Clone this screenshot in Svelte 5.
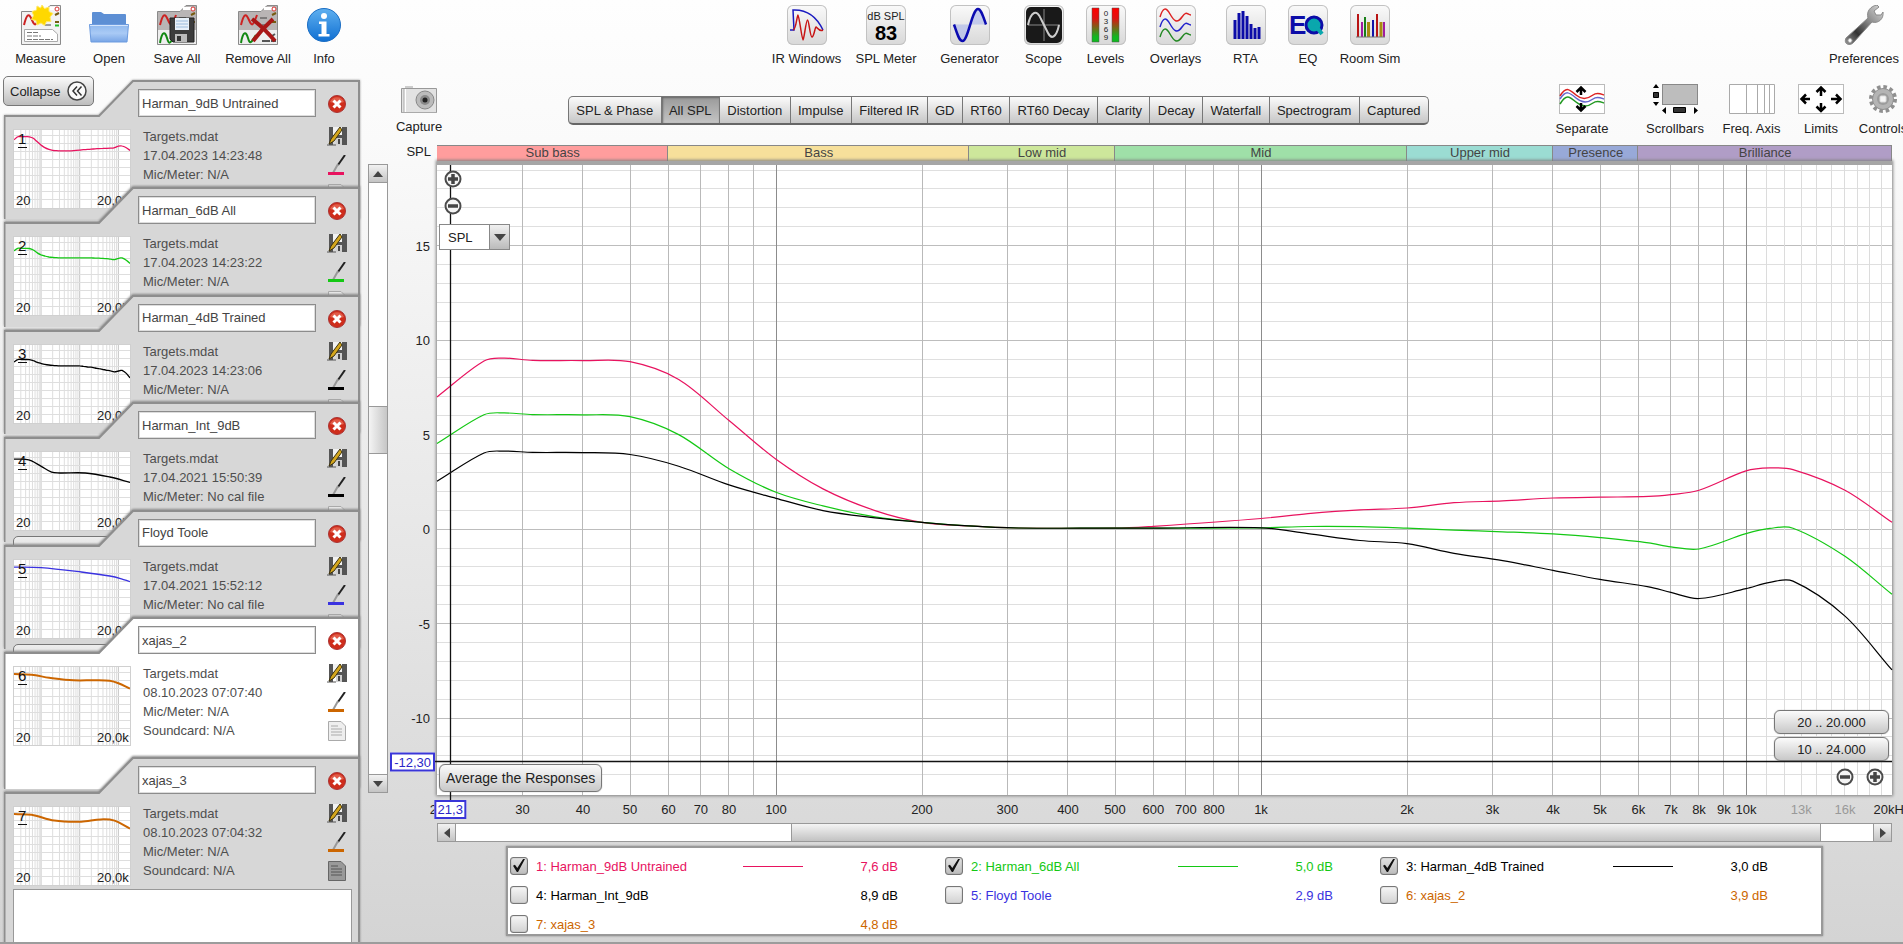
<script>
  let plot_w = 1455;
  let plot_h = 629;

  const F_MIN = 20;
  const F_MAX = 20000;
  const DB_TOP = 19.27;
  const DB_BOTTOM = -14.07;

  const freqs = [
    20, 25, 27.5, 31.5, 40, 50, 63, 80, 100, 125, 160, 200, 250, 315, 500, 600,
    1000, 1250, 1600, 2000, 2500, 3150, 4000, 5000, 6300, 7000, 8000, 10000,
    11200, 12500, 16000, 20000,
  ];

  const zip = (levels) => levels.map((db, i) => [freqs[i], db]);

  const harman_9 = zip([
    7.0, 8.9, 9.05, 8.93, 8.92, 8.86, 7.92, 5.75, 3.7, 2.13, 0.98, 0.36, 0.17,
    0.06, 0.05, 0.15, 0.56, 0.82, 1.02, 1.12, 1.4, 1.5, 1.65, 1.69, 1.73, 1.83,
    2.06, 3.08, 3.24, 3.15, 2.06, 0.36,
  ]);
  const harman_6 = zip([
    4.53, 6.05, 6.15, 6.06, 6.05, 5.95, 5.0, 3.2, 1.95, 1.23, 0.65, 0.36, 0.17,
    0.06, 0.05, 0.05, 0.07, 0.14, 0.13, 0.05, -0.05, -0.14, -0.25, -0.45, -0.73,
    -0.94, -1.05, -0.24, 0.04, 0.05, -1.44, -3.45,
  ]);
  const harman_4 = zip([
    2.53, 4.03, 4.13, 4.06, 4.05, 3.95, 3.33, 2.34, 1.63, 0.98, 0.6, 0.36, 0.17,
    0.06, 0.05, 0.05, 0.07, -0.24, -0.6, -0.77, -1.28, -1.67, -2.18, -2.66,
    -3.05, -3.35, -3.67, -3.15, -2.82, -2.75, -4.6, -7.45,
  ]);

  const cards = [
    { id: 1, name: "Harman_9dB Untrained", date: "17.04.2023 14:23:48", mic: "N/A", color: "#e8135f", value: "7,6 dB", on: true, points: harman_9 },
    { id: 2, name: "Harman_6dB All", date: "17.04.2023 14:23:22", mic: "N/A", color: "#14c814", value: "5,0 dB", on: true, points: harman_6 },
    { id: 3, name: "Harman_4dB Trained", date: "17.04.2023 14:23:06", mic: "N/A", color: "#000000", value: "3,0 dB", on: true, points: harman_4 },
    {
      id: 4, name: "Harman_Int_9dB", date: "17.04.2021 15:50:39", mic: "No cal file", color: "#000000", value: "8,9 dB",
      points: [[20, 8.6], [40, 8.5], [57, 7.6], [104, 4], [188, 0.5], [300, 0], [1400, 0], [6000, -2.5], [20000, -5.9]],
    },
    {
      id: 5, name: "Floyd Toole", date: "17.04.2021 15:52:12", mic: "No cal file", color: "#3a32e0", value: "2,9 dB",
      points: [[20, 8.7], [100, 8.3], [1100, 5.6], [6000, 3.1], [12000, 1.4], [20000, -0.4]],
    },
    {
      id: 6, name: "xajas_2", date: "08.10.2023 07:07:40", mic: "N/A", color: "#cc6600", value: "3,9 dB", bold: true, selected: true,
      points: [[20, 8.7], [57, 8.3], [163, 6.4], [700, 4.8], [2500, 4.8], [6000, 4.5], [10000, 3], [20000, -0.4]],
    },
    {
      id: 7, name: "xajas_3", date: "08.10.2023 07:04:32", mic: "N/A", color: "#cc6600", value: "4,8 dB", bold: true, notes: true,
      points: [[20, 8.7], [57, 8.3], [220, 4.6], [1100, 3.9], [3500, 5.4], [8000, 4.6], [20000, -0.4]],
    },
  ];

  const bands = [
    { name: "Sub bass", from: 20, to: 60, color: "#ff9d9d" },
    { name: "Bass", from: 60, to: 250, color: "#f7e09b" },
    { name: "Low mid", from: 250, to: 500, color: "#cde79b" },
    { name: "Mid", from: 500, to: 2000, color: "#9fe0a8" },
    { name: "Upper mid", from: 2000, to: 4000, color: "#9bdcd3" },
    { name: "Presence", from: 4000, to: 6000, color: "#98a9d8" },
    { name: "Brilliance", from: 6000, to: 20000, color: "#b09dc6" },
  ];

  const tabs = [
    "SPL & Phase", "All SPL", "Distortion", "Impulse", "Filtered IR", "GD", "RT60",
    "RT60 Decay", "Clarity", "Decay", "Waterfall", "Spectrogram", "Captured",
  ];
  let active_tab = "All SPL";

  const freq_labels = [
    [20, "20"], [30, "30"], [40, "40"], [50, "50"], [60, "60"], [70, "70"], [80, "80"],
    [100, "100"], [200, "200"], [300, "300"], [400, "400"], [500, "500"], [600, "600"],
    [700, "700"], [800, "800"], [1000, "1k"], [2000, "2k"], [3000, "3k"], [4000, "4k"],
    [5000, "5k"], [6000, "6k"], [7000, "7k"], [8000, "8k"], [9000, "9k"], [10000, "10k"],
    [13000, "13k"], [16000, "16k"], [20000, "20kHz"],
  ];

  const grid_freqs = [];
  for (let decade = 10; decade <= 10000; decade *= 10) {
    for (let i = 1; i < 10; i++) {
      const f = decade * i;
      if (f > F_MIN && f < F_MAX) grid_freqs.push(f);
    }
  }
  const fine_freqs = [11, 12, 13, 14, 15, 16, 17, 18, 19].map((k) => k * 1000);

  const grid_dbs = [];
  for (let db = 19; db >= -13; db--) grid_dbs.push(db);

  const freqToX = (f, w) => (Math.log10(f / F_MIN) / 3) * w;

  // smooth curve through the points
  const curve = (points, fx, fy) => {
    const p = points.map(([f, db]) => [fx(f), fy(db)]);
    let d = `M${p[0][0].toFixed(1)},${p[0][1].toFixed(1)}`;
    for (let i = 0; i < p.length - 1; i++) {
      const a = p[i - 1] || p[i];
      const b = p[i];
      const c = p[i + 1];
      const e = p[i + 2] || c;
      const t = (c[0] - b[0]) / 3;
      const mb = c === a ? 0 : (c[1] - a[1]) / (c[0] - a[0]);
      const mc = e[0] === b[0] ? 0 : (e[1] - b[1]) / (e[0] - b[0]);
      d += `C${(b[0] + t).toFixed(1)},${(b[1] + mb * t).toFixed(1)} ${(c[0] - t).toFixed(1)},${(c[1] - mc * t).toFixed(1)} ${c[0].toFixed(1)},${c[1].toFixed(1)}`;
    }
    return d;
  };

  const thumbX = (f) => freqToX(f, 116);
  const thumbY = (db) => 21 - db * 1.6;

  $: x = (f) => freqToX(f, plot_w);
  $: y = (db) => ((DB_TOP - db) / (DB_TOP - DB_BOTTOM)) * plot_h;
  $: line = (v) => Math.floor(v) + 0.5;
</script>

{#snippet sheet(gray)}
  <path d="M.5 39.500V6.500H23L29 .500H39.500V39.500Z" fill={gray ? "#b9b5b5" : "#f2f2f2"} stroke="#8a8a8a" />
  <path d="M26 3.500H34" stroke="#fff" stroke-width="3" />
  <circle cx="36" cy="4" r="2" fill="#fff" stroke="#d33" />
  <path d="M34 10l4-2M34 17h4" stroke="#765a10" stroke-width="2" />
  <path d="M22 13h7M24 20h6" stroke="#444" stroke-width="1" />
  <path d="M3 20C6 8 8 8 11 15s4 6 8-5" fill="none" stroke="#c22" stroke-width="2" />
{/snippet}

{#snippet floppy()}
  <path d="M13 13H37V37H16L13 34Z" fill="#3c3c3c" stroke="#222" />
  <rect x="18" y="13" width="14" height="12" fill="#e8f1fa" />
  <path d="M19 16h12M19 19h12M19 22h12" stroke="#9cbcdd" />
  <rect x="18" y="29" width="12" height="8" fill="#bbb" />
  <rect x="20" y="31" width="4" height="5" fill="#333" />
{/snippet}

{#snippet zoomSign(plus)}
  <svg width="18" height="18" viewBox="0 0 18 18">
    <circle cx="9" cy="9" r="7.500" fill="#f4f4f4" stroke="#4b4b4b" stroke-width="2" />
    <path d={plus ? "M4 9H14M9 4V14" : "M4 9H14"} stroke="#444" stroke-width="3.500" />
  </svg>
{/snippet}

<div class="page">
  <header class="toolbar">
    <div class="tools tools-file">
      <button class="tool">
        <svg width="40" height="40" viewBox="0 0 40 40">
          {@render sheet(false)}
          <path d="M3.500 24.500H31.500L36.500 29V36.500H3.500Z" fill="#fff" stroke="#aaa" />
          <path d="M6 27.500h12M6 31h14M6 34.500h26" stroke="#777" stroke-dasharray="5 1" />
          <path d="M34 20.500h4" stroke="#2b2" stroke-width="2" />
          <path d="M21 0l2.500 3.500L28 2l0 4.500 4 2-3 3.500 1 4.500-4.500 0-2 4-3.500-2.500-4 2-1-4.500-4.500-1 2-4L11 6.500l4.500-1.500L16 1l3.500 2Z" fill="#ffd800" stroke="#ffe96b" />
        </svg>
        Measure
      </button>
      <button class="tool">
        <svg width="40" height="40" viewBox="0 0 40 40">
          <defs>
            <linearGradient id="folder" x2="0" y2="1">
              <stop offset="0" stop-color="#8fb8ee" /><stop offset=".5" stop-color="#a9caf5" /><stop offset="1" stop-color="#78a5e6" />
            </linearGradient>
          </defs>
          <path d="M3 20V8Q3 7 4 7H12L15 9H36Q37 9 37 10V20Z" fill="#5d8fd4" />
          <path d="M.500 19.500H39.500L38 37H2Z" fill="url(#folder)" stroke="#6c9bdf" />
          <path d="M1 20.500H39" stroke="#d3e4fb" />
        </svg>
        Open
      </button>
      <button class="tool">
        <svg width="40" height="40" viewBox="0 0 40 40">
          {@render sheet(true)}
          <path d="M1 25H39V39H1Z" fill="#eee" />
          <path d="M3 38C5 26 8 26 10 33s3 5 5 2" fill="none" stroke="#181" stroke-width="2" />
          {@render floppy()}
        </svg>
        Save All
      </button>
      <button class="tool">
        <svg width="40" height="40" viewBox="0 0 40 40">
          {@render sheet(true)}
          <path d="M1 25H39V39H1Z" fill="#eee" />
          <path d="M3 38C5 26 8 26 10 33s3 5 8-3" fill="none" stroke="#181" stroke-width="2" />
          <path d="M24 36h8M34 31l3-2M33 36h5" stroke="#555" stroke-width="2" />
          <path d="M14 14Q25 22 37 36M35 14Q24 24 15 36" fill="none" stroke="#a81616" stroke-width="4" />
        </svg>
        Remove All
      </button>
      <button class="tool">
        <svg width="40" height="40" viewBox="0 0 40 40">
          <defs>
            <linearGradient id="info" x2="0" y2="1">
              <stop offset="0" stop-color="#5fb0f0" /><stop offset="1" stop-color="#0f6fd2" />
            </linearGradient>
          </defs>
          <circle cx="20" cy="20" r="16.500" fill="url(#info)" stroke="#1b6ec4" />
          <circle cx="20" cy="11" r="3" fill="#fff" />
          <path d="M15 16.500H22.500V29H25.500V31.500H14.500V29H17.500V19H15Z" fill="#fff" />
        </svg>
        Info
      </button>
    </div>

    <div class="tools tools-windows">
      <button class="tool">
        <svg class="tile" width="40" height="40" viewBox="0 0 40 40">
          <path d="M3 25H7L6 5Q26 4 36 25" fill="none" stroke="#1a1ac0" stroke-width="1.500" />
          <path d="M6 25C9 25 10 10 11 10S15 35 16 35 19 15 20.500 15 23 32 25 32 28 22 29 22 32 27 36 25" fill="none" stroke="#c81414" stroke-width="1.500" />
        </svg>
        IR Windows
      </button>
      <button class="tool">
        <span class="tile spl"><small>dB SPL</small><b>83</b></span>
        SPL Meter
      </button>
      <button class="tool">
        <svg class="tile" width="40" height="40" viewBox="0 0 40 40">
          <path d="M4 19.500H20C18 28 16 36 12.500 36 9 36 7 28 4 19.500ZM20 19.500C23 10 25 4 28 4s5 7 8 15.500Z" fill="#a9b4ea" opacity=".6" />
          <path d="M4 19.500C7 28 9 36 12.500 36 18 36 22 4 28 4c3 0 5 7 8 15.500" fill="none" stroke="#0b0bb0" stroke-width="2.500" />
        </svg>
        Generator
      </button>
      <button class="tool">
        <svg class="tile" width="40" height="40" viewBox="0 0 40 40">
          <rect x="2" y="2" width="36" height="36" rx="5" fill="#191919" />
          <path d="M4 20H36M20 4V36" stroke="#888" />
          <path d="M4 20C7 6 13 4 17 14l7 14C27 34 32 34 35 20" fill="none" stroke="#ccc" stroke-width="2" />
        </svg>
        Scope
      </button>
      <button class="tool">
        <svg class="tile" width="40" height="40" viewBox="0 0 40 40">
          <defs>
            <linearGradient id="level" x2="0" y2="1">
              <stop offset="0" stop-color="#f00" /><stop offset=".3" stop-color="#e01010" /><stop offset=".85" stop-color="#10b820" />
            </linearGradient>
          </defs>
          <path d="M6 3H13V37H6ZM26 3H33V37H26Z" fill="url(#level)" stroke="#555" stroke-width=".5" />
          <g class="scale">
            <text x="20" y="11">0</text><text x="20" y="19">3</text><text x="20" y="27">6</text><text x="20" y="35">9</text>
          </g>
        </svg>
        Levels
      </button>
      <button class="tool">
        <svg class="tile" width="40" height="40" viewBox="0 0 40 40">
          <g fill="none" stroke-width="1.500">
            <path d="M4 12C7 2 10 2 14 9s7 10 12 3 5-2 9-2" stroke="#d22" />
            <path d="M4 22C7 12 10 12 14 19s7 10 12 3 5-2 9-2" stroke="#22c" />
            <path d="M4 32C7 22 10 22 14 29s7 10 12 3 5-2 9-2" stroke="#282" />
          </g>
        </svg>
        Overlays
      </button>
      <button class="tool">
        <svg class="tile" width="40" height="40" viewBox="0 0 40 40">
          <path d="M9 34V15M13 34V8M17 34V6M21 34V11M25 34V19M29 34V23M33 34V22" stroke="#0c0ca8" stroke-width="3" />
        </svg>
        RTA
      </button>
      <button class="tool">
        <svg class="tile" width="40" height="40" viewBox="0 0 40 40">
          <circle cx="26" cy="20" r="8" fill="#0aa7ad" stroke="#0c0ca8" stroke-width="3" />
          <path d="M27 20L34 29" stroke="#0aa7ad" stroke-width="4" />
          <text class="eq" x="1" y="29">E</text>
        </svg>
        EQ
      </button>
      <button class="tool">
        <svg class="tile" width="40" height="40" viewBox="0 0 40 40">
          <g stroke-width="2">
            <path d="M8 32V9M27 32V9" stroke="#b81414" /><path d="M12 32V17M34 32V17" stroke="#a01ca0" />
            <path d="M15 32V12" stroke="#188018" /><path d="M18.500 32V17M31 32V17" stroke="#a88a10" stroke-width="3" />
            <path d="M23 32V15" stroke="#1414a8" /><path d="M6 32H35" stroke="#777" stroke-width="1" />
          </g>
        </svg>
        Room Sim
      </button>
    </div>

    <div class="tools tools-prefs">
      <button class="tool">
        <svg width="40" height="40" viewBox="0 0 40 40">
          <defs>
            <linearGradient id="steel" x1="0" y1="1" x2="1" y2="0">
              <stop offset="0" stop-color="#999" /><stop offset=".3" stop-color="#333" /><stop offset=".6" stop-color="#888" /><stop offset="1" stop-color="#ddd" />
            </linearGradient>
          </defs>
          <path d="M2 33L24 13C22 6 27 1 33 0L35 2 30 6 32 10 37 10 39 7C40 14 34 19 28 17L10 37C6 42-1 39 2 33Z" fill="url(#steel)" stroke="#8a8a8a" />
          <circle cx="6" cy="35.500" r="2" fill="#fff" stroke="#aaa" />
        </svg>
        Preferences
      </button>
    </div>
  </header>

  <div class="body">
    <aside class="sidebar">
      <button class="collapse">
        Collapse
        <svg width="20" height="20" viewBox="0 0 20 20">
          <circle cx="10" cy="10" r="9" fill="#fafafa" stroke="#444" stroke-width="1.500" />
          <path d="M10 5.500L6 10l4 4.500M14.500 5.500L10.500 10l4 4.500" fill="none" stroke="#333" stroke-width="1.500" />
        </svg>
      </button>
      <div class="cards">
        {#each cards as card, i}
          <article class="card" class:stacked={i > 0}>
            <svg class="shape" width="356" height="100%">
              <path d="M.500 400V36H95L129 1H355V400" fill={card.selected ? "#fff" : "#d7d7d7"} stroke="#8e8e8e" stroke-width="2" />
            </svg>
            <div class="card-row">
              <svg class="thumb" width="116" height="78">
                <rect width="116" height="78" fill="#fff" />
                {#each grid_freqs as f}
                  <path d="M{thumbX(f)} 0V78" stroke={[100, 1000, 10000].includes(f) ? "#c4c4c4" : "#dedede"} />
                {/each}
                {#each [1, 2, 3, 4, 5, 6, 7, 8, 9] as n}
                  <path d="M0 {n * 8 - 3}.5H116" stroke="#dedede" />
                {/each}
                <path d={curve(card.points, thumbX, thumbY)} fill="none" stroke={card.color} stroke-width={card.bold ? 2 : 1.3} />
                <text x="4" y="14" class="thumb-id">{card.id}</text>
                <path d="M4 17.500H13" stroke="#111" />
                <text x="2" y="75">20</text>
                <text x="83" y="75">20,0k</text>
              </svg>
              <div class="card-info">
                <input class="name" aria-label="Measurement {card.id} name" value={card.name} />
                <p>Targets.mdat</p>
                <p>{card.date}</p>
                <p>Mic/Meter: {card.mic}</p>
                <p>Soundcard: {card.mic}</p>
              </div>
              <div class="card-actions">
                <button class="close" aria-label="Remove measurement">
                  <svg width="20" height="20" viewBox="0 0 20 20">
                    <circle cx="10" cy="10" r="8.500" fill="#cf2d1b" stroke="#a33" />
                    <path d="M3 8A7.500 7.500 0 0 1 17 8Q10 11 3 8Z" fill="#e8705c" opacity=".7" />
                    <path d="M6.500 6.500l7 7M13.500 6.500l-7 7" stroke="#fff" stroke-width="3" />
                  </svg>
                </button>
                <button aria-label="Save measurement">
                  <svg width="20" height="20" viewBox="0 0 20 20">
                    <path d="M2 1H6V19H2ZM15 1H20V19H15ZM6 9H15V12H6Z" fill="#555" />
                    <path d="M6 1H15V9H6Z" fill="#f2f2f2" />
                    <path d="M9 12H15V19H9Z" fill="#d0d0d0" />
                    <path d="M11 13H13V18H11Z" fill="#444" />
                    <path d="M0 19H9" stroke="#555" />
                    <path d="M13 1L4 13 2 18 7 15 15 4Z" fill="#d4a61c" stroke="#3c3210" />
                  </svg>
                </button>
                <button aria-label="Trace colour">
                  <svg width="20" height="20" viewBox="0 0 20 20">
                    <path d="M18 0L11 10" stroke="#222" stroke-width="2" />
                    <path d="M11 9L6 18" stroke="#999" stroke-width="2" />
                    <path d="M1 18.500H17" stroke={card.color} stroke-width="3" />
                  </svg>
                </button>
                <button aria-label="Notes">
                  <svg width="20" height="20" viewBox="0 0 20 20">
                    <path d="M1.500.500H14L18.500 5V19.500H1.500Z" fill={card.notes ? "#999" : "#eee"} stroke={card.notes ? "#666" : "#aaa"} />
                    <path d="M4 5h7M4 8h11M4 11h11M4 14h11" stroke={card.notes ? "#555" : "#aaa"} />
                  </svg>
                </button>
              </div>
            </div>
            {#if card.mic === "No cal file"}
              <button class="cal" aria-label="Change cal file"></button>
            {/if}
            {#if card.notes}
              <textarea class="notes" aria-label="Notes"></textarea>
            {/if}
          </article>
        {/each}
      </div>
    </aside>

    <div class="vscroll">
      <button aria-label="Scroll up"><svg width="10" height="6"><path d="M0 6L5 0L10 6Z" fill="#444" /></svg></button>
      <div class="vtrack"><div class="vthumb"></div></div>
      <button aria-label="Scroll down"><svg width="10" height="6"><path d="M0 0L5 6L10 0Z" fill="#444" /></svg></button>
    </div>

    <main>
      <div class="graph-bar">
        <button class="tool capture">
          <svg width="38" height="30" viewBox="0 0 38 30">
            <path d="M5 2h8v3H5Z" fill="#ccc" />
            <path d="M1.500 4.500H36.500V28.500H1.500Z" fill="#e2e2e2" stroke="#999" />
            <path d="M5 5V28" stroke="#fff" stroke-width="2" />
            <path d="M4 5V28M1 28.500H37" stroke="#aaa" />
            <circle cx="25" cy="16" r="9" fill="#bbb" stroke="#888" />
            <circle cx="25" cy="16" r="5" fill="#8a8a8a" />
            <circle cx="25" cy="16" r="2.500" fill="#222" />
          </svg>
          Capture
        </button>

        <nav class="tabs">
          {#each tabs as tab}
            <button class:active={tab === active_tab} on:click={() => (active_tab = tab)}>{tab}</button>
          {/each}
        </nav>

        <div class="tools tools-graph">
          <button class="tool">
            <svg width="46" height="30" viewBox="0 0 46 30">
              <rect x=".5" y=".5" width="45" height="29" fill="#fff" stroke="#bbb" />
              <g fill="none" stroke-width="1.500">
                <path d="M1 12C7 2 10 5 17 11s13 3 17 0 8-1 11 0" stroke="#d22" />
                <path d="M1 15C7 6 10 8 17 14s13 4 17 1 8-1 11 0" stroke="#66c" />
                <path d="M1 20C7 10 10 12 17 18s13 4 17 1 8-1 11 0" stroke="#292" />
              </g>
              <path d="M22 11V4M17.500 8L22 3.500 26.500 8M22 19V26M17.500 22L22 26.500 26.500 22" fill="none" stroke="#000" stroke-width="2.500" />
            </svg>
            Separate
          </button>
          <button class="tool">
            <svg width="46" height="30" viewBox="0 0 46 30">
              <rect x="10.500" y=".5" width="35" height="20" fill="#bdbdbd" stroke="#888" />
              <path d="M1 4L4 0 7 4ZM1 18L4 22 7 18ZM14 23L10 26.500 14 30ZM42 23L46 26.500 42 30Z" />
              <path d="M1.500 8.500H6.500V13.500H1.500ZM21.500 23.500H33.500V28.500H21.500Z" fill="#333" stroke="#000" />
            </svg>
            Scrollbars
          </button>
          <button class="tool">
            <svg width="46" height="30" viewBox="0 0 46 30">
              <path d="M.5.5H45.500V29.500H.5ZM17.500 1V29M28.500 1V29M35.500 1V29M40.500 1V29" fill="#fff" stroke="#aaa" />
            </svg>
            Freq. Axis
          </button>
          <button class="tool">
            <svg width="46" height="30" viewBox="0 0 46 30">
              <rect x=".5" y=".5" width="45" height="29" fill="#fff" stroke="#bbb" />
              <path d="M23 12V4M18.500 8L23 3.500 27.500 8M23 19V27M18.500 22.500L23 27 27.500 22.500M12 15H4M8 10.500L3.500 15 8 19.500M33 15H42M38 10.500L42.500 15 38 19.500" fill="none" stroke="#000" stroke-width="2.500" />
            </svg>
            Limits
          </button>
          <button class="tool">
            <svg width="30" height="30" viewBox="0 0 30 30">
              <circle cx="15" cy="15" r="12" fill="none" stroke="#8f8f8f" stroke-width="4" stroke-dasharray="3.500 2.783" />
              <circle cx="15" cy="15" r="10.500" fill="#b4b4b4" stroke="#8f8f8f" />
              <circle cx="15" cy="15" r="6" fill="#9c9c9c" />
              <rect x="12" y="12" width="6" height="6" rx="1" fill="#f6f6f6" stroke="#ddd" />
            </svg>
            Controls
          </button>
        </div>
      </div>

      <div class="chart">
        <span class="axis-title">SPL</span>
        <div class="bands">
          {#each bands as band}
            <span style="flex-grow: {Math.log10(band.to / band.from)}; background: {band.color}">{band.name}</span>
          {/each}
        </div>

        <div class="plot" bind:clientWidth={plot_w} bind:clientHeight={plot_h}>
          <svg class="canvas" width="100%" height="100%">
            {#each grid_dbs as db}
              <path d="M0 {line(y(db))}H{plot_w}" stroke={db % 5 === 0 ? "#bdbdbd" : "#dfdfdf"} />
            {/each}
            {#each fine_freqs as f}
              <path d="M{line(x(f))} 0V{plot_h}" stroke="#dcdcdc" />
            {/each}
            {#each grid_freqs as f}
              <path d="M{line(x(f))} 0V{plot_h}" stroke={[100, 1000, 10000].includes(f) ? "#8c8c8c" : "#b9b9b9"} />
            {/each}
            {#each cards.filter((c) => c.on) as c}
              <path d={curve(c.points, x, y)} class="trace" stroke={c.color} />
            {/each}
            <path d="M{line(x(21.3))} 0V{plot_h + 10}M-3 {line(y(-12.3))}H{plot_w}" stroke="#111" stroke-width="1.300" />
            {#each [15, 10, 5, 0, -5, -10] as db}
              <text x="-7" y={y(db) + 5} text-anchor="end">{db}</text>
            {/each}
            {#each freq_labels as [f, label]}
              <text x={x(f)} y={plot_h + 19} text-anchor="middle" class:faint={f === 13000 || f === 16000}>{label}</text>
            {/each}
          </svg>

          <span class="readout level" style="top: {y(-12.3)}px">-12,30</span>
          <span class="readout freq" style="left: {x(21.3)}px">21,3</span>

          <div class="overlay-left">
            <button class="zoom" aria-label="Zoom in vertically">{@render zoomSign(true)}</button>
            <button class="zoom" aria-label="Zoom out vertically">{@render zoomSign(false)}</button>
            <div class="picker">
              <select aria-label="Y axis">
                <option>SPL</option>
              </select>
              <svg width="12" height="7"><path d="M0 0H12L6 7Z" fill="#444" /></svg>
            </div>
          </div>

          <button class="push average">Average the Responses</button>

          <div class="overlay-right">
            <button class="push">20 .. 20.000</button>
            <button class="push">10 .. 24.000</button>
            <div class="zoom-row">
              <button class="zoom" aria-label="Zoom out horizontally">{@render zoomSign(false)}</button>
              <button class="zoom" aria-label="Zoom in horizontally">{@render zoomSign(true)}</button>
            </div>
          </div>
        </div>

        <div class="hscroll">
          <button aria-label="Scroll left"><svg width="6" height="10"><path d="M6 0L0 5L6 10Z" fill="#444" /></svg></button>
          <div class="htrack"><div class="hthumb"></div></div>
          <button aria-label="Scroll right"><svg width="6" height="10"><path d="M0 0L6 5L0 10Z" fill="#444" /></svg></button>
        </div>

        <div class="legend">
          {#each cards as card}
            <label style="color: {card.color}">
              <input type="checkbox" checked={card.on} />
              <span>{card.id}: {card.name}</span>
              <i class:visible={card.on}></i>
              <span class="value">{card.value}</span>
            </label>
          {/each}
        </div>
      </div>
    </main>
  </div>
</div>

<style>
  :global(body) {
    margin: 0;
    overflow: hidden;
  }

  .page {
    height: 100vh;
    display: flex;
    flex-direction: column;
    box-sizing: border-box;
    border-bottom: 2px solid #9c9c9c;
    background: linear-gradient(#fefefe, #fafafa 15%, #d4d4d4);
    font-family: "Liberation Sans", Arial, sans-serif;
    font-size: 13px;
    color: #222;
    overflow: hidden;
  }

  button,
  input,
  select,
  textarea {
    font: inherit;
    color: inherit;
    margin: 0;
  }

  button {
    padding: 0;
    border: 0;
    background: none;
  }

  text {
    font-size: 13px;
    fill: #222;
  }

  /* toolbars */

  .toolbar {
    height: 76px;
    flex: none;
    display: flex;
    justify-content: space-between;
  }

  .tools {
    display: grid;
    align-items: start;
  }

  .tools-file {
    padding: 5px 0 0 6px;
    grid-template-columns: 69px 68px 68px 94px 38px;
  }

  .tools-windows {
    padding-top: 5px;
    grid-template-columns: 77px 82px 85px 63px 61px 79px 61px 64px 60px;
  }

  .tools-prefs {
    padding-top: 5px;
    grid-template-columns: 78px;
  }

  .tools-graph {
    margin: 0 -11px 0 auto;
    grid-template-columns: 110px 76px 77px 62px 62px;
  }

  .tool {
    display: flex;
    flex-direction: column;
    align-items: center;
    gap: 6px;
    line-height: 16px;
    white-space: nowrap;
  }

  .tools-graph .tool {
    gap: 7px;
  }

  .tile {
    border-radius: 6px;
    background: linear-gradient(#fafafa, #d8d8d8);
    box-shadow: inset 0 0 0 1px #c2c2c2;
  }

  .spl {
    width: 40px;
    height: 40px;
    display: flex;
    flex-direction: column;
    align-items: center;
    padding-top: 5px;
    box-sizing: border-box;
  }

  .spl small {
    font-size: 11px;
    line-height: 12px;
  }

  .spl b {
    font-size: 20px;
    line-height: 22px;
    color: #000;
  }

  .scale text {
    font-size: 8px;
    text-anchor: middle;
  }

  .eq {
    font-size: 26px;
    font-weight: bold;
    fill: #0c0ca8;
  }

  .body {
    flex: 1;
    min-height: 0;
    display: flex;
  }

  /* measurement cards */

  .sidebar {
    position: relative;
    width: 368px;
    flex: none;
    padding: 4px 0 0 4px;
    box-sizing: border-box;
  }

  .collapse {
    position: absolute;
    z-index: 1;
    top: 0;
    left: 3px;
    width: 91px;
    height: 30px;
    display: flex;
    align-items: center;
    justify-content: space-between;
    padding: 0 6px;
    border: 1px solid #777;
    border-radius: 5px;
    background: linear-gradient(#fafafa, #bdbdbd);
  }

  .cards {
    height: 100%;
    display: grid;
    grid-template-rows: repeat(5, minmax(0, 1fr)) 140px 185px;
  }

  .card {
    position: relative;
  }

  .shape {
    position: absolute;
    top: 0;
    left: 0;
    height: calc(100% + 32px);
    filter: drop-shadow(0 0 1px #999);
  }

  .stacked .shape {
    filter: drop-shadow(0 -1px 1px #888);
  }

  .card-row {
    position: relative;
    display: flex;
    align-items: flex-start;
    padding-left: 10px;
    height: 127px;
  }

  .thumb {
    margin: 50px 8px 0 0;
    box-shadow: 0 0 0 1px #d0d0d0;
    flex: none;
  }

  .thumb .thumb-id {
    font-size: 15px;
    fill: #111;
  }

  .card-info {
    width: 178px;
    padding-top: 9px;
  }

  .name {
    display: block;
    width: 100%;
    height: 28px;
    box-sizing: border-box;
    margin-bottom: 10px;
    padding: 0 3px;
    border: 1px solid #8c8c8c;
    box-shadow: inset 0 0 0 1px #ddd;
    background: #fff;
    color: #444;
  }

  .card-info p {
    margin: 0 0 0 5px;
    line-height: 19px;
    color: #4e4e4e;
    white-space: nowrap;
  }

  .card-actions {
    display: flex;
    flex-direction: column;
    gap: 9px;
    padding: 14px 0 0 11px;
  }

  .card-actions button {
    height: 20px;
    line-height: 0;
  }

  .card-actions .close {
    margin-bottom: 3px;
  }

  .cal,
  .notes {
    position: relative;
    display: block;
    width: 339px;
    box-sizing: border-box;
    margin: 7px 0 0 9px;
  }

  .cal {
    height: 26px;
    border: 1px solid #777;
    border-radius: 5px;
    background: linear-gradient(#eee, #ccc);
  }

  .notes {
    height: 56px;
    margin-top: 5px;
    border: 1px solid #999;
    background: #fff;
    resize: none;
  }

  /* scrollbars */

  .vscroll {
    width: 20px;
    flex: none;
    box-sizing: border-box;
    margin: 88px 0 149px;
    display: flex;
    flex-direction: column;
    border: 1px solid #999;
    background: #fff;
  }

  .vscroll button,
  .hscroll button {
    flex: 0 0 18px;
    display: flex;
    align-items: center;
    justify-content: center;
    background: linear-gradient(#f2f2f2, #c4c4c4);
  }

  .vscroll button:first-child {
    border-bottom: 1px solid #999;
  }

  .vscroll button:last-child {
    border-top: 1px solid #999;
  }

  .vtrack {
    flex: 1;
    padding-top: 223px;
  }

  .vthumb {
    height: 46px;
    border: 1px solid #999;
    border-width: 1px 0;
    background: linear-gradient(90deg, #f4f4f4, #c6c6c6);
  }

  .hscroll {
    grid-column: 2;
    display: flex;
    box-sizing: border-box;
    height: 19px;
    margin-top: 28px;
    border: 1px solid #999;
    background: #fff;
  }

  .hscroll button:first-child {
    border-right: 1px solid #999;
  }

  .hscroll button:last-child {
    border-left: 1px solid #999;
  }

  .htrack {
    flex: 1;
    padding: 0 52px 0 335px;
  }

  .hthumb {
    height: 100%;
    box-sizing: border-box;
    border: 1px solid #999;
    border-width: 0 1px;
    background: linear-gradient(#f4f4f4, #c2c2c2);
  }

  /* graph */

  main {
    flex: 1;
    min-width: 0;
    display: flex;
    flex-direction: column;
  }

  .graph-bar {
    height: 69px;
    flex: none;
    display: flex;
    align-items: flex-start;
    padding-top: 8px;
    box-sizing: border-box;
  }

  .capture {
    width: 62px;
    gap: 5px;
  }

  .tabs {
    display: flex;
    flex: 0 0 861px;
    margin: 12px 0 0 118px;
    height: 29px;
    box-sizing: border-box;
    border: 1px solid #777;
    border-bottom: 2px solid #666;
    border-radius: 5px;
    background: linear-gradient(#fbfbfb, #c6c6c6);
    overflow: hidden;
  }

  .tabs button {
    flex: 1 1 auto;
    padding: 1px 7px 0;
    white-space: nowrap;
    border-right: 1px solid #777;
  }

  .tabs button:last-child {
    border-right: 0;
  }

  .tabs .active {
    background: linear-gradient(#9a9a9a, #c4c4c4);
    box-shadow: inset 1px 1px 2px #666;
  }

  .chart {
    flex: 1;
    min-height: 0;
    display: grid;
    grid-template-columns: 49px 1fr 11px;
    grid-template-rows: 16px 1fr auto auto;
  }

  .axis-title {
    padding-right: 6px;
    text-align: right;
    line-height: 14px;
  }

  .bands {
    display: flex;
    border-top: 1px solid #888;
  }

  .bands span {
    flex-basis: 0;
    text-align: center;
    line-height: 14px;
    color: #444;
    box-shadow: inset -1px 0 #888;
  }

  .plot {
    grid-column: 2;
    position: relative;
    border-top: 4px solid #a6a6a6;
    background: #fff;
    box-shadow: 0 0 3px 1px #808080;
  }

  .canvas {
    position: absolute;
    inset: 0;
    overflow: visible;
  }

  .trace {
    fill: none;
    stroke-width: 1.2;
  }

  .canvas .faint {
    fill: #999;
  }

  .readout {
    position: absolute;
    border: 2px solid #3a36d8;
    background: #fff;
    color: #2a26c8;
    line-height: 15px;
    padding: 0 1px;
  }

  .level {
    right: 100%;
    margin-right: 2px;
    padding: 0 2px;
    transform: translateY(-50%);
  }

  .freq {
    top: 100%;
    margin-top: 5px;
    transform: translateX(-50%);
  }

  .overlay-left {
    position: absolute;
    top: 5px;
    left: 2px;
  }

  .zoom {
    display: block;
    width: 18px;
    height: 18px;
    line-height: 0;
  }

  .overlay-left .zoom {
    margin: 0 0 9px 5px;
  }

  .picker {
    display: flex;
    align-items: center;
    width: 71px;
    height: 26px;
    box-sizing: border-box;
    border: 1px solid #888;
    background: linear-gradient(#fff, #fff) 0 0 / 50px 100% no-repeat, linear-gradient(#f0f0f0, #bbb);
  }

  .picker select {
    width: 50px;
    height: 24px;
    padding: 0 8px;
    border: 0;
    border-right: 1px solid #888;
    background: none;
    appearance: none;
    border-radius: 0;
  }

  .picker svg {
    margin-left: 4px;
  }

  .push {
    height: 24px;
    border: 1px solid #777;
    border-radius: 6px;
    background: linear-gradient(#fbfbfb, #c8c8c8);
    box-shadow: 0 0 1px #777;
  }

  .average {
    position: absolute;
    left: 2px;
    bottom: 3px;
    height: 28px;
    padding: 0 6px;
    font-size: 14px;
  }

  .overlay-right {
    position: absolute;
    right: 3px;
    bottom: 9px;
    width: 115px;
    display: grid;
    gap: 3px;
  }

  .zoom-row {
    display: flex;
    justify-content: flex-end;
    gap: 12px;
    padding: 4px 5px 0 0;
  }

  .legend {
    grid-column: 2;
    display: grid;
    grid-template-columns: repeat(3, 1fr);
    grid-auto-rows: 29px;
    height: 90px;
    box-sizing: border-box;
    margin: 4px 69px 6px;
    padding: 0 6px 0 2px;
    border: 2px solid #999;
    background: #fff;
    box-shadow: 0 0 2px #888;
  }

  .legend label {
    display: grid;
    grid-template-columns: 18px 199px 60px 87px;
    column-gap: 8px;
    align-items: center;
    padding-top: 8px;
    height: 20px;
    white-space: nowrap;
  }

  .legend .value {
    text-align: right;
  }

  .legend i {
    height: 1px;
  }

  .legend .visible {
    background: currentColor;
  }

  .legend input {
    appearance: none;
    width: 18px;
    height: 18px;
    border: 1px solid #777;
    border-radius: 3px;
    background: linear-gradient(#f6f6f6, #d2d2d2);
    box-shadow: inset 0 0 1px #666;
  }

  .legend input:checked {
    background: linear-gradient(#e2e2e2, #bcbcbc);
  }

  .legend input:checked::after {
    content: "";
    display: block;
    width: 12px;
    height: 13px;
    margin: 1px 2px;
    background: #111;
    clip-path: polygon(0 52%, 16% 44%, 36% 70%, 84% 0, 100% 0, 42% 100%, 32% 100%);
  }
</style>
